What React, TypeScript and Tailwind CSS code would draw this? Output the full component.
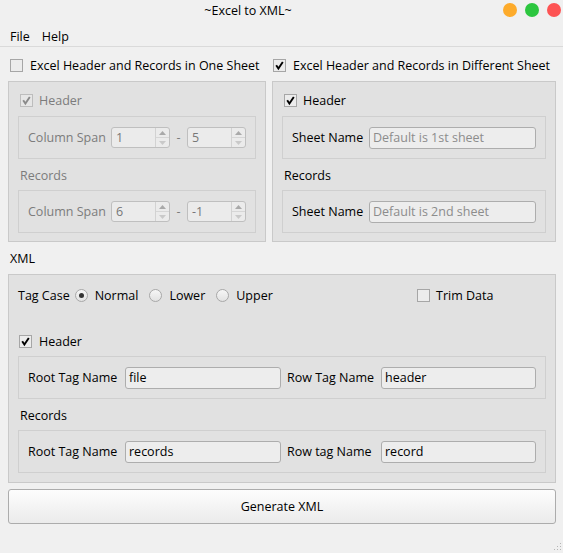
import React from 'react';

const FONT = '"Open Sans", "Noto Sans CJK SC", sans-serif';

// Open Sans sits a pixel higher than the original font, so labels are nudged down
function T({ children, className = '' }: { children: React.ReactNode; className?: string }) {
  return <span className={`relative top-[1px] ${className}`}>{children}</span>;
}

function Check({ checked = false, disabled = false }: { checked?: boolean; disabled?: boolean }) {
  return (
    <span
      className={`inline-flex h-[13px] w-[13px] shrink-0 items-center justify-center border ${
        disabled ? 'border-[#bdbdbd] bg-[#e6e6e6]' : 'border-[#a6a6a6] bg-[#ececec]'
      }`}
    >
      {checked && (
        <svg width="11" height="11" viewBox="0 0 11 11">
          <path
            d="M2.2 5.2 L4.4 8.6 L8.8 2"
            fill="none"
            stroke={disabled ? '#8a8a8a' : '#000'}
            strokeWidth="1.9"
          />
        </svg>
      )}
    </span>
  );
}

function Radio({ checked = false }: { checked?: boolean }) {
  return (
    <span className="inline-flex h-[13px] w-[13px] shrink-0 items-center justify-center rounded-full border border-[#a8a8a8] bg-gradient-to-b from-[#f6f6f6] to-[#e2e2e2]">
      {checked && <span className="h-[5px] w-[5px] rounded-full bg-[#333]" />}
    </span>
  );
}

function Spin({ value }: { value: string }) {
  return (
    <div className="flex h-[21px] w-[59px] shrink-0 items-stretch rounded-[3px] border border-[#bfbfbf] bg-[#ebebeb]">
      <span className="relative top-[1px] flex flex-1 items-center pl-[4px] text-[#777]">{value}</span>
      <div className="flex w-[14px] flex-col border-l border-[#d2d2d2]">
        <div className="flex flex-1 items-center justify-center">
          <svg width="7" height="4" viewBox="0 0 7 4">
            <path d="M0 4 L3.5 0 L7 4 Z" fill="#a9a9a9" />
          </svg>
        </div>
        <div className="flex flex-1 items-center justify-center border-t border-[#d6d6d6]">
          <svg width="7" height="4" viewBox="0 0 7 4">
            <path d="M0 0 L3.5 4 L7 0 Z" fill="#c9c9c9" />
          </svg>
        </div>
      </div>
    </div>
  );
}

function Field({ value, placeholder, className = '' }: { value?: string; placeholder?: string; className?: string }) {
  return (
    <div
      className={`flex h-[22px] items-center rounded-[3px] border border-[#adadad] bg-[#ededed] pl-[3px] ${className}`}
    >
      {value ? <T className="text-black">{value}</T> : <T className="text-[#8c8c8c]">{placeholder}</T>}
    </div>
  );
}

export default function App() {
  return (
    <div
      className="relative flex h-[553px] w-[563px] flex-col overflow-hidden bg-[#f0f0f0] text-[12.5px] text-black"
      style={{ fontFamily: FONT }}
    >
      {/* title bar */}
      <div className="flex h-[26px] items-start">
        <div className="flex-1 pt-[1px] text-center leading-[20px]">~Excel to XML~</div>
        <div className="flex w-[67px] gap-[8px] pl-[7px] pt-[3px]">
          <span className="h-[14px] w-[14px] rounded-full bg-[#fdab2b]" />
          <span className="h-[14px] w-[14px] rounded-full bg-[#2cc63f]" />
          <span className="h-[14px] w-[14px] rounded-full bg-[#fd5353]" />
        </div>
      </div>

      {/* menu */}
      <div className="flex h-[21px] items-center gap-[12px] border-b border-[#dadada] pl-[10px] pt-[2px] leading-[20px]">
        <span>File</span>
        <span>Help</span>
      </div>

      <div className="flex flex-col pl-[8px] pr-[7px]">
        {/* mode switch */}
        <div className="mt-[8px] flex h-[20px] items-center">
          <div className="flex w-[263px] items-center gap-[7px] pl-[2px]">
            <Check />
            <T>Excel Header and Records in One Sheet</T>
          </div>
          <div className="flex items-center gap-[7px] pl-[2px]">
            <Check checked />
            <T>Excel Header and Records in Different Sheet</T>
          </div>
        </div>

        {/* sheet groups */}
        <div className="mt-[6px] flex gap-[6px]">
          <div className="flex h-[161px] w-[258px] flex-col border border-[#c9c9c9] bg-[#e1e1e1] px-[9px] pt-[8px] text-[#7c7c7c]">
            <div className="flex h-[20px] items-center gap-[6px] pl-[2px]">
              <Check checked disabled />
              <T>Header</T>
            </div>
            <div className="mt-[6px] flex h-[43px] items-center border border-[#cfcfcf] px-[9px]">
              <T className="flex-1">Column Span</T>
              <Spin value="1" />
              <T className="w-[17px] text-center">-</T>
              <Spin value="5" />
            </div>
            <div className="mt-[6px] flex h-[20px] items-center pl-[2px]">
              <T>Records</T>
            </div>
            <div className="mt-[5px] flex h-[43px] items-center border border-[#cfcfcf] px-[9px]">
              <T className="flex-1">Column Span</T>
              <Spin value="6" />
              <T className="w-[17px] text-center">-</T>
              <Spin value="-1" />
            </div>
          </div>

          <div className="flex h-[161px] flex-1 flex-col border border-[#c9c9c9] bg-[#e1e1e1] px-[9px] pt-[8px]">
            <div className="flex h-[20px] items-center gap-[6px] pl-[2px]">
              <Check checked />
              <T>Header</T>
            </div>
            <div className="mt-[6px] flex h-[43px] items-center border border-[#cfcfcf] px-[9px]">
              <T className="w-[77px]">Sheet Name</T>
              <Field placeholder="Default is 1st sheet" className="flex-1" />
            </div>
            <div className="mt-[6px] flex h-[20px] items-center pl-[2px]">
              <T>Records</T>
            </div>
            <div className="mt-[5px] flex h-[43px] items-center border border-[#cfcfcf] px-[9px]">
              <T className="w-[77px]">Sheet Name</T>
              <Field placeholder="Default is 2nd sheet" className="flex-1" />
            </div>
          </div>
        </div>

        <div className="mt-[6px] flex h-[20px] items-center pl-[2px]">
          <T>XML</T>
        </div>

        {/* xml group */}
        <div className="mt-[6px] flex h-[209px] flex-col border border-[#c9c9c9] bg-[#e1e1e1] px-[9px] pt-[10px]">
          <div className="flex h-[20px] items-center">
            <T className="mr-[5px]">Tag Case</T>
            <Radio checked />
            <T className="ml-[7px] mr-[11px]">Normal</T>
            <Radio />
            <T className="ml-[7px] mr-[11px]">Lower</T>
            <Radio />
            <T className="ml-[7px]">Upper</T>
            <div className="ml-auto flex w-[129px] items-center gap-[6px]">
              <Check />
              <T>Trim Data</T>
            </div>
          </div>
          <div className="mt-[26px] flex h-[20px] items-center gap-[7px] pl-[1px]">
            <Check checked />
            <T>Header</T>
          </div>
          <div className="mt-[5px] flex h-[43px] items-center border border-[#cfcfcf] px-[9px]">
            <T className="w-[97px]">Root Tag Name</T>
            <Field value="file" className="w-[156px]" />
            <T className="ml-[6px] w-[94px]">Row Tag Name</T>
            <Field value="header" className="flex-1" />
          </div>
          <div className="mt-[6px] flex h-[20px] items-center pl-[2px]">
            <T>Records</T>
          </div>
          <div className="mt-[5px] flex h-[43px] items-center border border-[#cfcfcf] px-[9px]">
            <T className="w-[97px]">Root Tag Name</T>
            <Field value="records" className="w-[156px]" />
            <T className="ml-[6px] w-[94px]">Row tag Name</T>
            <Field value="record" className="flex-1" />
          </div>
        </div>

        <button className="mt-[6px] flex h-[35px] items-center justify-center rounded-[3px] border border-[#acacac] bg-gradient-to-b from-[#fdfdfd] to-[#ebebeb]">
          <T>Generate XML</T>
        </button>
      </div>

      {/* size grip */}
      <svg className="absolute bottom-[2px] right-[1px]" width="10" height="10" viewBox="0 0 10 10">
        {[
          [8, 2],
          [8, 5],
          [5, 5],
          [8, 8],
          [5, 8],
          [2, 8],
        ].map(([x, y], i) => (
          <rect key={i} x={x} y={y} width="1" height="1" fill="#b5b5b5" />
        ))}
      </svg>
    </div>
  );
}
